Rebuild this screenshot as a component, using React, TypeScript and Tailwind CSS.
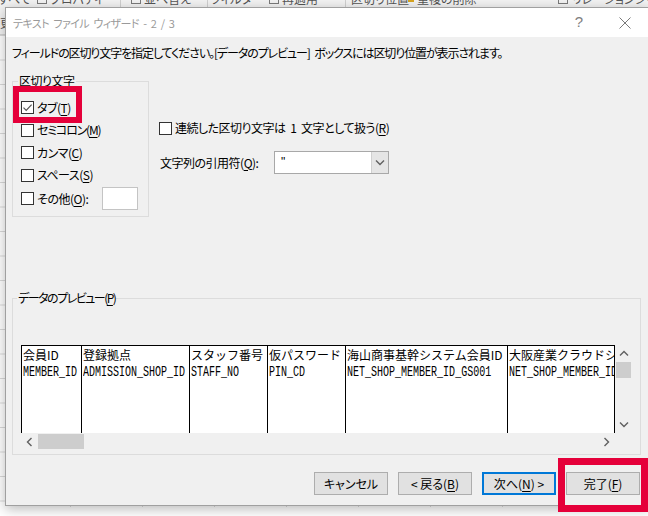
import type { ReactNode } from "react";

const sans = "font-['Noto_Sans_CJK_JP',sans-serif] [font-feature-settings:'palt']";

const columns = [
  { width: "w-[60px]", head: "会員ID", code: "MEMBER_ID" },
  { width: "w-[108px]", head: "登録拠点", code: "ADMISSION_SHOP_ID" },
  { width: "w-[78px]", head: "スタッフ番号", code: "STAFF_NO" },
  { width: "w-[78px]", head: "仮パスワード", code: "PIN_CD" },
  { width: "w-[162px]", head: "海山商事基幹システム会員ID", code: "NET_SHOP_MEMBER_ID_GS001" },
  { width: "w-[108px] border-r", head: "大阪産業クラウドシステム会員ID", code: "NET_SHOP_MEMBER_ID_GS002" },
];

// underlined access key inside a label
function Key({ children }: { children: ReactNode }) {
  return <span className="underline decoration-1 underline-offset-2">{children}</span>;
}

function CheckBox({ checked = false, children }: { checked?: boolean; children: ReactNode }) {
  return (
    <div className="flex items-center gap-[3px]">
      <span className="flex h-[13px] w-[13px] shrink-0 items-center justify-center border border-[#333333] bg-white">
        {checked && (
          <svg viewBox="0 0 11 11" className="h-[11px] w-[11px]" fill="none" stroke="#555555" strokeWidth="1.2">
            <path d="M1.5 5.6 L4.2 8.3 L9.6 2.6" />
          </svg>
        )}
      </span>
      <span className="leading-[16px]">{children}</span>
    </div>
  );
}

function Chevron({ dir }: { dir: "up" | "down" | "left" | "right" }) {
  const vertical = dir === "up" || dir === "down";
  const d = {
    up: "M1 5.5 L5 1.5 L9 5.5",
    down: "M1 1.5 L5 5.5 L9 1.5",
    left: "M5.5 1 L1.5 5 L5.5 9",
    right: "M1.5 1 L5.5 5 L1.5 9",
  }[dir];
  return (
    <svg
      viewBox={vertical ? "0 0 10 7" : "0 0 7 10"}
      className={vertical ? "h-[7px] w-[10px]" : "h-[10px] w-[7px]"}
      fill="none"
      stroke="#606060"
      strokeWidth="1.4"
    >
      <path d={d} />
    </svg>
  );
}

function Button({ primary = false, children }: { primary?: boolean; children: ReactNode }) {
  return (
    <button
      type="button"
      className={
        primary
          ? "flex h-[23px] w-[74px] items-center justify-center border-2 border-[#0078d7] bg-[#e1e1e1] leading-[16px]"
          : "flex h-[23px] w-[74px] items-center justify-center border border-[#adadad] bg-[#e1e1e1] leading-[16px]"
      }
    >
      {children}
    </button>
  );
}

function RibbonIcon() {
  return <span className="h-[10px] w-[10px] shrink-0 border border-[#7a7a7a]" />;
}

function Ribbon() {
  return (
    <div className="h-[44px] border-b border-[#d5d5d5] bg-[#f3f3f3]">
      <div className="-mt-[9px] flex h-[16px] items-center whitespace-nowrap text-[12px] leading-[16px] text-[#555555]">
        <span className="-ml-[2px] w-[39px] shrink-0">すべて</span>
        <span className="flex w-[83px] shrink-0 items-center gap-[3px]">
          <RibbonIcon />
          プロパティ
        </span>
        <span className="h-[16px] w-px shrink-0 bg-[#d0d0d0]" />
        <span className="flex w-[86px] shrink-0 items-center gap-[3px] pl-[10px]">
          <RibbonIcon />
          並べ替え
        </span>
        <span className="h-[16px] w-px shrink-0 bg-[#d0d0d0]" />
        <span className="w-[58px] shrink-0 pl-[3px]">フィルター</span>
        <span className="flex w-[79px] shrink-0 items-center gap-[3px] pl-[3px]">
          <RibbonIcon />
          再適用
        </span>
        <span className="h-[16px] w-px shrink-0 bg-[#d0d0d0]" />
        <span className="w-[62px] shrink-0 pl-[5px]">区切り位置</span>
        <span className="flex w-[150px] shrink-0 items-center gap-[3px]">
          <span className="h-[6px] w-[6px] bg-[#d9a520]" />
          重複の削除
        </span>
        <span className="flex shrink-0 items-center gap-[4px]">
          <RibbonIcon />
          リレーションシップ
        </span>
      </div>
      <div className="mt-[8px] text-[12px] leading-[16px] text-[#555555]">更新</div>
    </div>
  );
}

function Dialog() {
  return (
    <div className={`absolute left-[5px] top-[7px] w-[644px] border border-[#a0a0a0] bg-[#f0f0f0] text-[12px] text-black shadow-[0_3px_12px_rgba(0,0,0,0.28)] [word-spacing:1.5px] ${sans}`}>
      {/* title bar */}
      <div className="flex h-[29px] items-center bg-white">
        <span className="flex-1 pl-[7px] text-[11px] leading-[16px] tracking-[-0.6px] text-[#9a9a9a] [word-spacing:2.5px]">
          テキスト ファイル ウィザード - 2 / 3
        </span>
        <span className="flex h-[29px] w-[46px] items-center justify-center font-['Liberation_Sans',sans-serif] text-[15px] text-[#808080]">?</span>
        <span className="flex h-[29px] w-[46px] items-center justify-center">
          <svg viewBox="0 0 12 12" className="h-[12px] w-[12px]" stroke="#7a7a7a" strokeWidth="1">
            <path d="M0.5 0.5 L11.5 11.5 M11.5 0.5 L0.5 11.5" />
          </svg>
        </span>
      </div>

      <div className="flex flex-col pb-[10px] pl-[6px] pr-[8px] pt-[8px]">
        <p className="leading-[16px] tracking-[-1.1px] [word-spacing:3px]">
          フィールドの区切り文字を指定してください。[データのプレビュー] ボックスには区切り位置が表示されます。
        </p>

        <div className="mt-[12px] flex items-start tracking-[-0.5px]">
          <fieldset className="w-[137px] border border-[#dcdcdc] pb-[5px] pl-[8px] pt-[7px]">
            <legend className="-ml-[3px] px-[1px] leading-[16px]">区切り文字</legend>
            <div className="flex h-[23px] items-center">
              <CheckBox checked>
                タブ(<Key>T</Key>)
              </CheckBox>
            </div>
            <div className="flex h-[22px] items-center tracking-[-1.2px]">
              <CheckBox>
                セミコロン(<Key>M</Key>)
              </CheckBox>
            </div>
            <div className="flex h-[23px] items-center">
              <CheckBox>
                カンマ(<Key>C</Key>)
              </CheckBox>
            </div>
            <div className="flex h-[22px] items-center">
              <CheckBox>
                スペース(<Key>S</Key>)
              </CheckBox>
            </div>
            <div className="flex h-[25px] items-center">
              <CheckBox>
                その他(<Key>O</Key>):
              </CheckBox>
              <span className="ml-[14px] h-[23px] w-[36px] border border-[#c4c4c4] bg-white" />
            </div>
          </fieldset>

          <div className="ml-[10px] flex flex-col pt-[47px]">
            <div className="[word-spacing:2.5px]">
              <CheckBox>
                連続した区切り文字は 1 文字として扱う(<Key>R</Key>)
              </CheckBox>
            </div>
            <div className="mt-[15px] flex items-center">
              <span className="w-[115px] shrink-0 pl-[1px] leading-[16px]">
                文字列の引用符(<Key>Q</Key>):
              </span>
              <div className="flex h-[23px] w-[115px] border border-[#a8a8a8] bg-white">
                <span className="flex-1 pl-[6px] font-['Liberation_Sans',sans-serif] leading-[21px]">"</span>
                <span className="flex w-[17px] items-center justify-center border-l border-[#d0d0d0] bg-[#e5e5e5]">
                  <Chevron dir="down" />
                </span>
              </div>
            </div>
          </div>
        </div>

        {/* preview */}
        <fieldset className="mt-[73px] w-[629px] border border-[#dcdcdc] pb-[4px] pl-[8px]">
          <legend className="-ml-[4px] px-[1px] leading-[16px] tracking-[-1.5px]">
            データのプレビュー(<Key>P</Key>)
          </legend>
          <div className="h-[39px]" />
          <div className="flex h-[88px]">
            <div className="flex w-[594px] overflow-hidden border-t border-black bg-white font-['Noto_Sans_CJK_JP',monospace] [font-feature-settings:normal] [word-spacing:0px]">
              {columns.map((col) => (
                <div key={col.code} className={`${col.width} shrink-0 overflow-hidden whitespace-nowrap border-l border-black pl-[1px]`}>
                  <div className="h-[16px] pt-[1px] text-[12px] leading-[16px]">{col.head}</div>
                  <div className="h-[16px] pt-[1px] leading-[16px]">
                    <span className="inline-block origin-left scale-x-[0.715] font-['Liberation_Mono',monospace] text-[14px]">
                      {col.code}
                    </span>
                  </div>
                </div>
              ))}
            </div>
            <div className="flex w-[17px] flex-col">
              <span className="flex h-[17px] items-center justify-center">
                <Chevron dir="up" />
              </span>
              <span className="mx-[1px] h-[16px] bg-[#cdcdcd]" />
              <span className="flex-1" />
              <span className="flex h-[17px] items-center justify-center">
                <Chevron dir="down" />
              </span>
            </div>
          </div>
          <div className="flex h-[17px]">
            <div className="flex w-[594px]">
              <span className="flex w-[17px] items-center justify-center">
                <Chevron dir="left" />
              </span>
              <span className="my-[1px] w-[46px] bg-[#cdcdcd]" />
              <span className="flex-1" />
              <span className="flex w-[17px] items-center justify-center">
                <Chevron dir="right" />
              </span>
            </div>
          </div>
        </fieldset>

        <div className="mt-[17px] flex justify-end gap-[10px]">
          <Button>キャンセル</Button>
          <Button>
            &lt; 戻る(<Key>B</Key>)
          </Button>
          <Button primary>
            次へ(<Key>N</Key>) &gt;
          </Button>
          <Button>
            完了(<Key>F</Key>)
          </Button>
        </div>
      </div>
    </div>
  );
}

export default function App() {
  return (
    <div className={`relative h-[516px] w-[648px] overflow-hidden bg-white ${sans}`}>
      <Ribbon />
      <div className="h-[472px] [background-image:linear-gradient(to_right,#dadada_1px,transparent_1px),linear-gradient(to_bottom,#dadada_1px,transparent_1px)] [background-position:70px_0px] [background-size:72px_24.5px]" />

      <Dialog />

      {/* highlight frames */}
      <div className="absolute left-[13px] top-[86px] h-[37px] w-[69px] border-[6px] border-[#e5003a]" />
      <div className="absolute left-[558px] top-[458px] h-[54px] w-[90px] border-[7px] border-[#e5003a]" />
    </div>
  );
}
